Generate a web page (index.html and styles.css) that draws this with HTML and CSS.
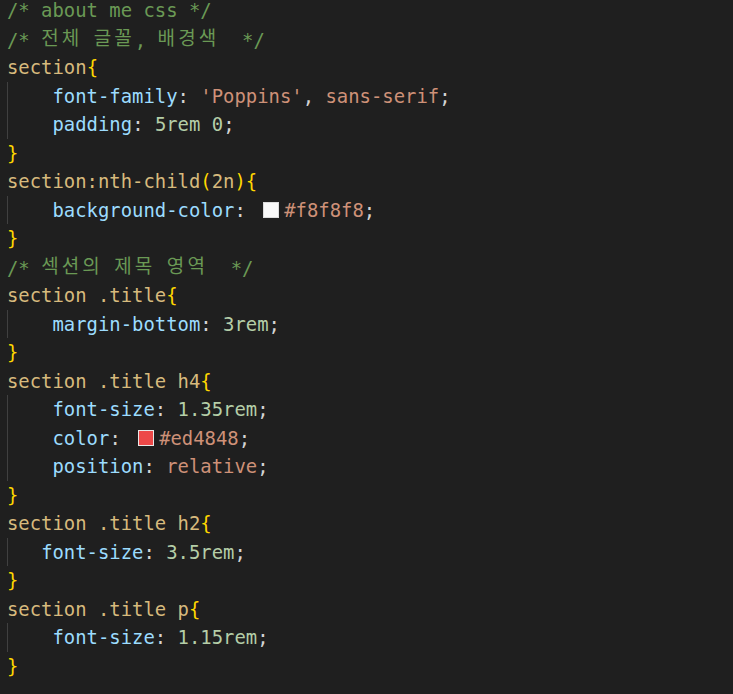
FILE: index.html
```html
<!DOCTYPE html>
<html lang="ko">
<head>
<meta charset="utf-8">
<title>styles.css</title>
<link rel="stylesheet" href="styles.css">
</head>
<body>
<div class="editor">
<div class="line"><span class="cm">/* about me css */</span></div>
<div class="line"><span class="cm">/* <span class="ko">전체</span> <span class="ko">글꼴</span>, <span class="ko">배경색</span>  */</span></div>
<div class="line"><span class="sel">section</span><span class="br">{</span></div>
<div class="line ind">    <span class="prop">font-family</span><span class="pn">: </span><span class="str">'Poppins'</span><span class="pn">, </span><span class="str">sans-serif</span><span class="pn">;</span></div>
<div class="line ind">    <span class="prop">padding</span><span class="pn">: </span><span class="num">5rem 0</span><span class="pn">;</span></div>
<div class="line"><span class="br">}</span></div>
<div class="line"><span class="sel">section:nth-child</span><span class="br">(</span><span class="sel">2n</span><span class="br">)</span><span class="br">{</span></div>
<div class="line ind">    <span class="prop">background-color</span><span class="pn">: </span><span class="swatch sw-light"></span><span class="str">#f8f8f8</span><span class="pn">;</span></div>
<div class="line"><span class="br">}</span></div>
<div class="line"><span class="cm">/* <span class="ko">섹션의</span> <span class="ko">제목</span> <span class="ko">영역</span>  */</span></div>
<div class="line"><span class="sel">section .title</span><span class="br">{</span></div>
<div class="line ind">    <span class="prop">margin-bottom</span><span class="pn">: </span><span class="num">3rem</span><span class="pn">;</span></div>
<div class="line"><span class="br">}</span></div>
<div class="line"><span class="sel">section .title h4</span><span class="br">{</span></div>
<div class="line ind">    <span class="prop">font-size</span><span class="pn">: </span><span class="num">1.35rem</span><span class="pn">;</span></div>
<div class="line ind">    <span class="prop">color</span><span class="pn">: </span><span class="swatch sw-red"></span><span class="str">#ed4848</span><span class="pn">;</span></div>
<div class="line ind">    <span class="prop">position</span><span class="pn">: </span><span class="str">relative</span><span class="pn">;</span></div>
<div class="line"><span class="br">}</span></div>
<div class="line"><span class="sel">section .title h2</span><span class="br">{</span></div>
<div class="line ind">   <span class="prop">font-size</span><span class="pn">: </span><span class="num">3.5rem</span><span class="pn">;</span></div>
<div class="line"><span class="br">}</span></div>
<div class="line"><span class="sel">section .title p</span><span class="br">{</span></div>
<div class="line ind">    <span class="prop">font-size</span><span class="pn">: </span><span class="num">1.15rem</span><span class="pn">;</span></div>
<div class="line"><span class="br">}</span></div>
</div>
</body>
</html>
```

FILE: styles.css
```css
html, body {
  margin: 0;
  padding: 0;
  background: #1f1f1f;
  height: 100%;
  overflow: hidden;
}

.editor {
  margin-top: -4px;
  font-family: "DejaVu Sans Mono", "Noto Sans CJK KR", monospace;
  font-size: 18.9px;
  line-height: 28.5px;
  color: #d4d4d4;
}

.line {
  white-space: pre;
  padding-left: 7px;
  height: 28.5px;
}

.ind {
  background: linear-gradient(#404040, #404040) no-repeat 7px 0 / 1px 100%;
}

.cm { color: #6a9955; }
.ko {
  font-family: "Noto Sans CJK KR", sans-serif;
  font-size: 19px;
  letter-spacing: 3.1px;
  position: relative;
  top: -2px;
}
.sel { color: #d7ba7d; }
.br { color: #ffd700; }
.prop { color: #9cdcfe; }
.pn { color: #d4d4d4; }
.str { color: #ce9178; }
.num { color: #b5cea8; }

.swatch {
  display: inline-block;
  box-sizing: border-box;
  width: 16px;
  height: 16px;
  margin: 0 5px 0 6px;
  border: 1px solid #e8e8e8;
  vertical-align: -1px;
}
.sw-light { background: #f8f8f8; border-color: #dcdcdc; }
.sw-red { background: #ed4848; }
```
